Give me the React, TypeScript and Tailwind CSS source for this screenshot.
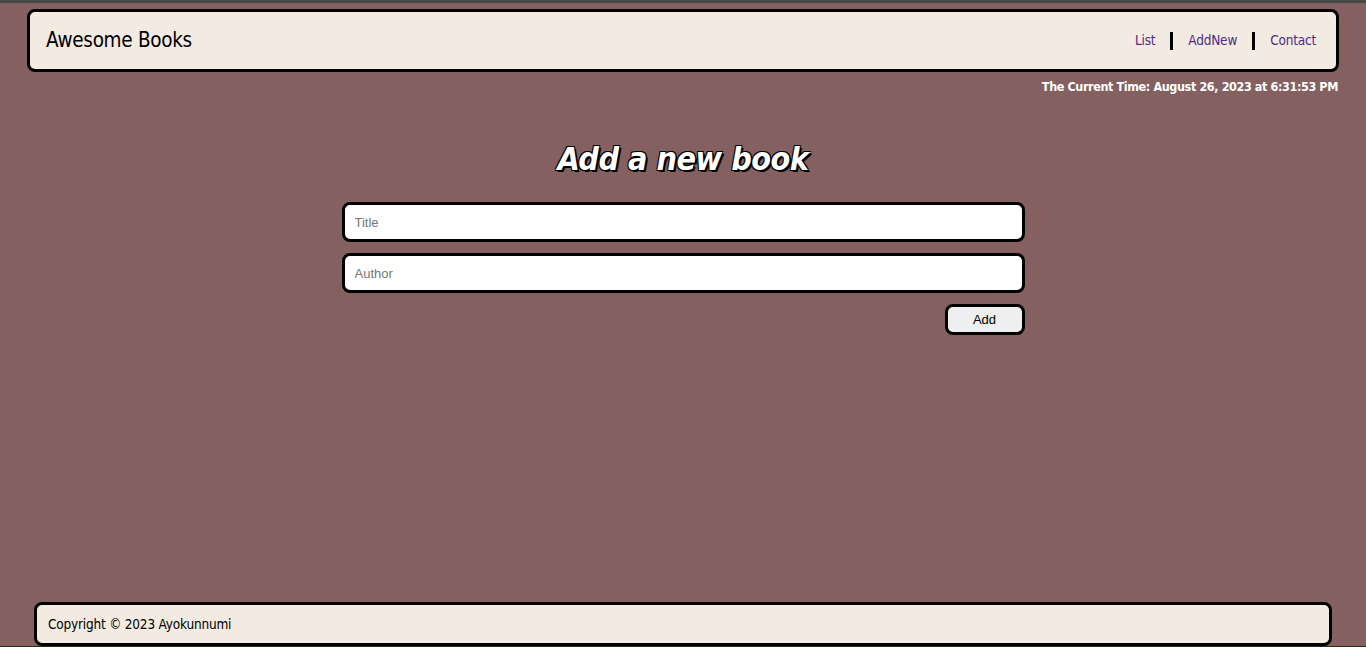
import React from "react";

const cond = { fontFamily: '"DejaVu Sans Condensed", "DejaVu Sans", sans-serif', fontStretch: "condensed" as const };

export default function App() {
  return (
    <div className="min-h-screen h-[647px] flex flex-col bg-[#846060] border-t-[3px] border-[#484848] overflow-hidden" style={cond}>
      <header className="mx-[27px] mt-[6px] h-[63px] flex items-center justify-between bg-[#f3ebe2] border-[3px] border-black rounded-[8px] pl-[16px] pr-[20px]">
        <h1 className="text-[20.5px] text-black tracking-[-0.3px]">Awesome Books</h1>
        <nav className="flex items-center text-[13.5px] text-[#4e2a86] tracking-[-0.2px]">
          <a className="pr-[15px]">List</a>
          <span className="w-[3px] h-[18px] bg-black" />
          <a className="px-[15px]">AddNew</a>
          <span className="w-[3px] h-[18px] bg-black" />
          <a className="pl-[15px]">Contact</a>
        </nav>
      </header>
      <div className="text-right text-white font-bold text-[12.5px] pr-[28px] mt-[5px] leading-[20px] tracking-[-0.4px]">
        The Current Time: August 26, 2023 at 6:31:53 PM
      </div>
      <main className="flex flex-col items-center">
        <h2 className="mt-[38px] text-[32px] leading-[48px] font-bold italic text-white tracking-[-0.5px] [text-shadow:1px_1px_0_#000,-1px_-1px_0_#000,1px_-1px_0_#000,-1px_1px_0_#000,2px_2px_0_#000]">
          Add a new book
        </h2>
        <div className="mt-[19px] w-[683px] flex flex-col gap-[11px]" style={{ fontFamily: '"Liberation Sans", Arial, sans-serif', fontStretch: "normal" }}>
          <input className="h-[40px] bg-white border-[3px] border-black rounded-[8px] px-[10px] text-[13px] placeholder:text-[#757575] outline-none" placeholder="Title" />
          <input className="h-[40px] bg-white border-[3px] border-black rounded-[8px] px-[10px] text-[13px] placeholder:text-[#757575] outline-none" placeholder="Author" />
          <div className="flex justify-end">
            <button className="w-[80px] h-[31px] bg-[#efefef] border-[3px] border-black rounded-[8px] text-[13px] text-black">Add</button>
          </div>
        </div>
      </main>
      <footer className="mt-auto mx-[34px] h-[44px] flex items-center bg-[#f3ebe2] border-[3px] border-black rounded-[8px] px-[11px] text-[13.5px] tracking-[-0.2px] text-black">
        Copyright © 2023 Ayokunnumi
      </footer>
      <div className="h-[1px] bg-[#2a2a1a]" />
    </div>
  );
}
